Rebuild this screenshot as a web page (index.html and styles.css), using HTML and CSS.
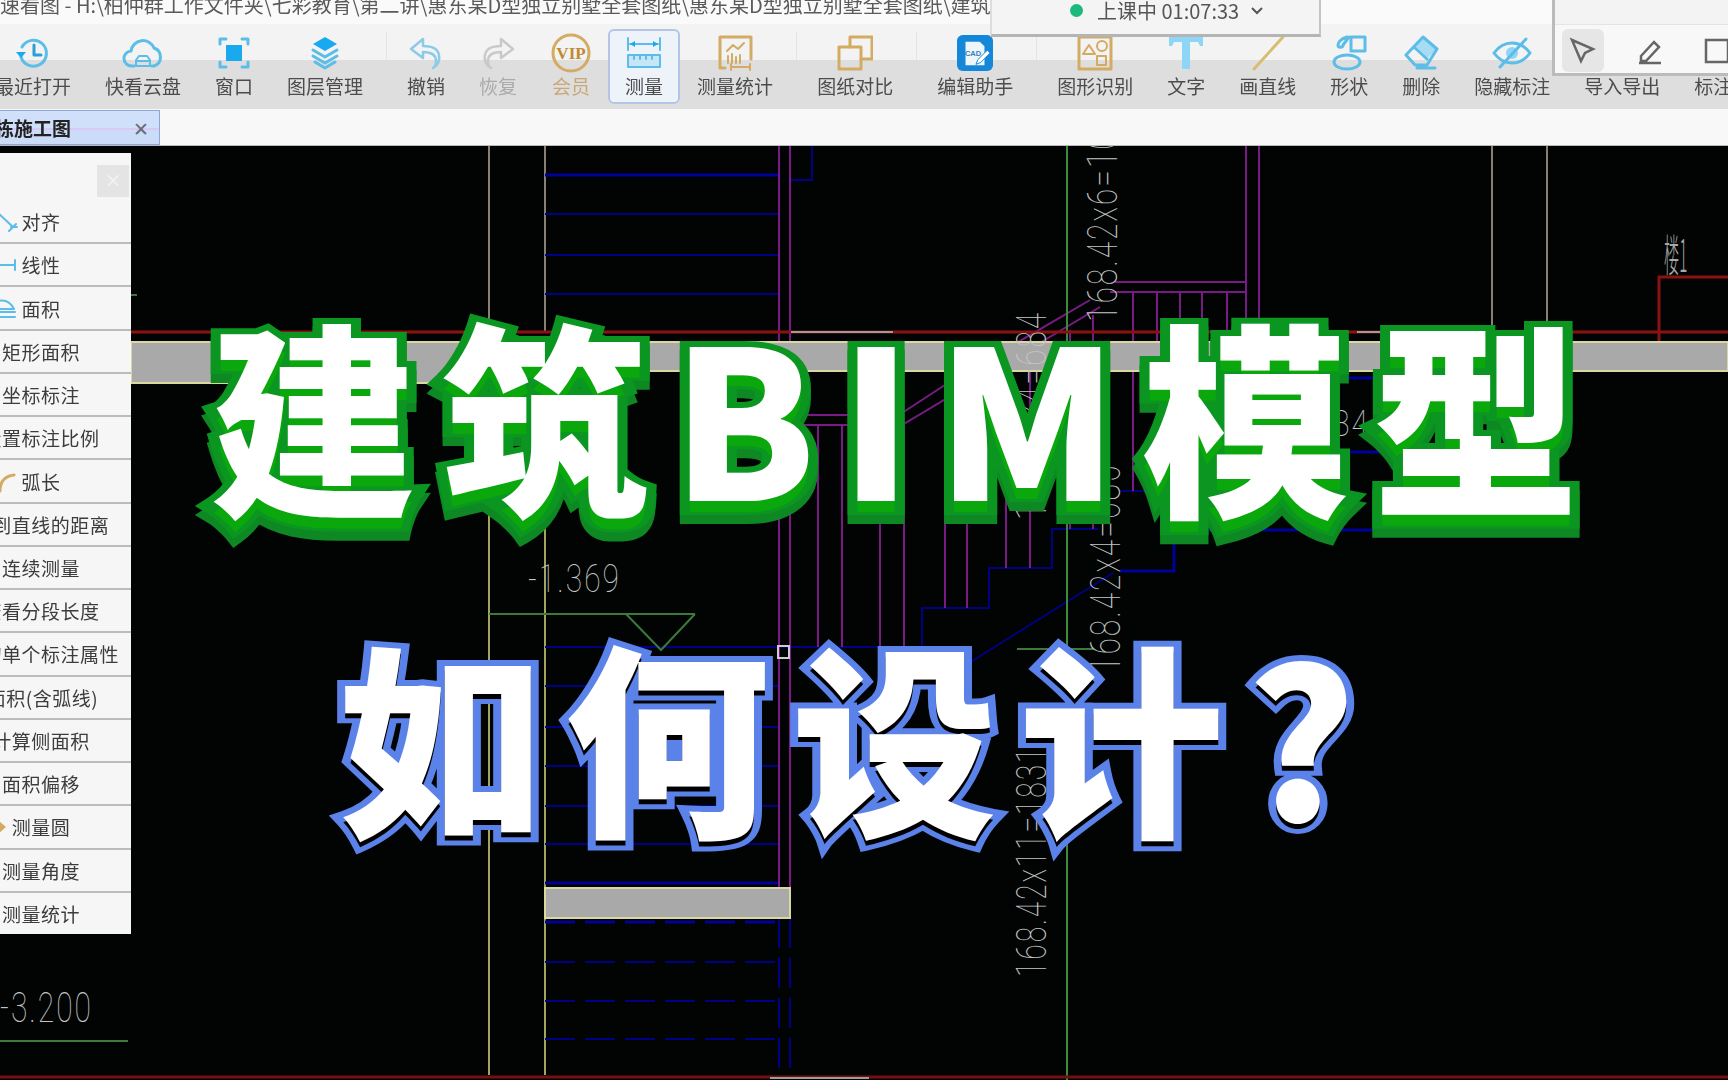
FILE: index.html
```html
<!DOCTYPE html>
<html lang="zh-CN">
<head>
<meta charset="utf-8">
<title>快速看图</title>
<link rel="stylesheet" href="styles.css">
</head>
<body>
<div class="app">
  <header class="titlebar">快速看图 - H:\柏仲群工作文件夹\七彩教育\第二讲\惠东某D型独立别墅全套图纸\惠东某D型独立别墅全套图纸\建筑\2</header>

  <nav class="toolbar">
    <div class="tool"><svg class="ic" viewBox="0 0 36 36"><path class="b-line" d="M7 12A13 13 0 1 1 6 22"/><path class="b-fill" d="M1 17h10l-5 6z"/><path class="b-line dark" d="M19 10v10h7"/></svg><span>最近打开</span></div>
    <div class="tool"><svg class="ic ic-wide" viewBox="0 0 40 36"><path class="b-line" d="M11 31H9a7.500 7.500 0 0 1-1-15 12 12 0 0 1 23-3 9.500 9.500 0 0 1 0 18h-2"/><path class="b-line thin" d="M13 31v-6l3-4h8l3 4v6zM13 26h14"/></svg><span>快看云盘</span></div>
    <div class="tool"><svg class="ic" viewBox="0 0 36 36"><rect class="b-fill" x="10" y="10" width="16" height="16"/><path class="b-line" d="M4 9V4h6M26 4h6v5M32 27v5h-6M10 32H4v-5"/></svg><span>窗口</span></div>
    <div class="tool"><svg class="ic" viewBox="0 0 36 36"><path class="b-fill" d="M18 2l12 7-12 7-12-7z"/><path class="b-line" d="M6 15l12 7 12-7M6 21l12 7 12-7M8 27l10 6 10-6"/></svg><span>图层管理</span></div>
    <i class="sep"></i>
    <div class="tool"><svg class="ic" viewBox="0 0 36 36"><path class="l-line" d="M15 4L3 14l12 9v-6c9 0 13 3 13 9 0 3-1 6-3 7 5-3 7-8 6-13-1-6-7-9-16-9z"/></svg><span>撤销</span></div>
    <div class="tool off"><svg class="ic" viewBox="0 0 36 36"><path class="g-line" d="M21 4l12 10-12 9v-6c-9 0-13 3-13 9 0 3 1 6 3 7-5-3-7-8-6-13 1-6 7-9 16-9z"/></svg><span>恢复</span></div>
    <div class="tool gold"><svg class="ic vip" viewBox="0 0 40 40"><circle class="au-line" cx="20" cy="20" r="18"/><text class="vip-text" x="20" y="26">VIP</text></svg><span>会员</span></div>
    <div class="tool active"><svg class="ic" viewBox="0 0 36 36"><path class="b-line thin" d="M2 3v12M34 3v12M4 9h28"/><path class="b-fill" d="M4 9l5-3v6zM32 9l-5-3v6z"/><rect class="b-line thin soft" x="2" y="20" width="32" height="12"/><path class="b-line thin" d="M8 20v4M14 20v4M20 20v4M26 20v4"/></svg><span>测量</span></div>
    <div class="tool"><svg class="ic" viewBox="0 0 36 36"><path class="au-line" d="M3 33V2h31v22M3 33h5"/><path class="au-line thin" d="M10 16l6-6 5 4 6-6M11 28v-7M15 28v-9M19 28v-6M23 28v-8M14 32h19M14 29v6M33 29v6"/></svg><span>测量统计</span></div>
    <i class="sep"></i>
    <div class="tool"><svg class="ic" viewBox="0 0 36 36"><path class="au-line" d="M13 12V2h22v22H24"/><rect class="au-line" x="2" y="12" width="22" height="22"/></svg><span>图纸对比</span></div>
    <i class="sep"></i>
    <div class="tool"><svg class="ic" viewBox="0 0 38 38"><rect class="cad-bg" width="38" height="38" rx="6"/><path class="cad-page" d="M9 7h15l5 5v20H9z"/><text class="cad-text" x="17" y="22">CAD</text><path class="cad-pen" d="M20 31l2-5 10-10 3 3-10 10z"/></svg><span>编辑助手</span></div>
    <i class="sep"></i>
    <div class="tool"><svg class="ic" viewBox="0 0 36 36"><rect class="au-line" x="2" y="2" width="32" height="32"/><path class="au-line thin" d="M6 19l6-9 6 9z"/><circle class="au-line thin" cx="25" cy="11" r="5"/><rect class="au-line thin" x="20" y="21" width="9" height="9"/></svg><span>图形识别</span></div>
    <div class="tool"><svg class="ic" viewBox="0 0 36 36"><path class="b-fill soft" d="M1 2h34v9h-3l-2-4h-8v27h-8V7H6l-2 4H1z"/></svg><span>文字</span></div>
    <div class="tool"><svg class="ic" viewBox="0 0 36 36"><path class="au-line wide" d="M4 34L33 2"/></svg><span>画直线</span></div>
    <div class="tool"><svg class="ic" viewBox="0 0 36 36"><path class="b-line" d="M16 2v0c-7 2-9 6-9 8 0 3 5 3 5 0l6-8"/><rect class="b-line" x="20" y="2" width="14" height="14"/><ellipse class="b-line" cx="16" cy="27" rx="13" ry="7"/></svg><span>形状</span></div>
    <div class="tool"><svg class="ic" viewBox="0 0 36 36"><path class="b-fill pale" d="M20 2l14 12-9 9-13-12z"/><path class="b-line" d="M20 2L3 20l9 10h12l10-16zM11 12l13 12M14 33h18"/></svg><span>删除</span></div>
    <div class="tool"><svg class="ic ic-wide" viewBox="0 0 40 36"><path class="b-line" d="M2 18c5-7 11-10 18-10s13 3 18 10c-5 7-11 10-18 10S7 25 2 18z"/><circle class="b-fill soft" cx="20" cy="18" r="6"/><path class="b-line" d="M8 32L34 4"/></svg><span>隐藏标注</span></div>
    <div class="tool"><svg class="ic" viewBox="0 0 36 36"></svg><span>导入导出</span></div>
    <div class="tool"><svg class="ic" viewBox="0 0 36 36"></svg><span>标注</span></div>
  </nav>

  <div class="tabbar">
    <div class="tab"><b>单栋施工图</b><span class="tab-x">✕</span></div>
  </div>

  <main class="canvas">
    <svg class="drawing" viewBox="0 146 1728 934">
      <g class="beige">
        <path d="M489 146V333M545 146V333M1492 146V333M1547 146V333"/>
      </g>
      <g class="yellow">
        <path d="M489 384V1075M545 384V1075"/>
      </g>
      <g class="blue">
        <path class="heavy" d="M545 175H779"/>
        <path d="M545 214H779M545 255H779M545 294H779"/>
        <path d="M790 180H812V146"/>
        <path d="M545 647H922V608H989V568H1052V529H1098M1120 491H1170"/>
        <path d="M545 686H779M545 727H779M545 766H779M545 806H779M545 844H779"/>
        <path class="heavy" d="M545 883H779"/>
        <path class="dash heavy" d="M545 922H779"/>
        <path class="dash" d="M545 962H779M545 1001H779M545 1039H779M779 918V1075M790 918V1075"/>
        <path d="M969 663L1113 573"/>
        <path class="heavy" d="M1120 571H1174V530H1390M1340 378H1390M1340 452H1390"/>
      </g>
      <g class="purple">
        <path d="M779 146V888M790 146V888M1246 146V380M1259 146V340"/>
        <path d="M1115 282H1246M1110 292H1246"/>
        <path d="M1133 292V491M1157 292V491M1180 292V380M1202 292V380M1227 292V380"/>
        <path d="M802 415H902M802 425H902L1100 307M902 413L948 383L1090 300"/>
        <path d="M818 425V647M842 425V647M880 425V647M904 425V647M945 400V608M967 388V608M1006 365V568M1030 350V568M1070 330V529M1093 315V529"/>
      </g>
      <g class="green">
        <path d="M1067 146V1080"/>
        <path class="dim" d="M489 614H695M626 614L661 650L695 614M0 1041H128M1017 649H1094M131 295H137"/>
      </g>
      <g class="red">
        <path d="M131 332H1728M1659 342V277H1728"/>
        <path class="thin-red" d="M0 1077H1728"/>
      </g>
      <path class="gray-seg" d="M791 332H893M1357 332H1382M770 1078H869"/>
      <rect class="band" x="131" y="342" width="414" height="41"/>
      <rect class="band" x="545" y="342" width="1183" height="29"/>
      <rect class="band" x="545" y="888" width="245" height="30"/>
      <rect class="marker" x="778" y="646" width="11" height="12"/>
      <g class="dim-text">
        <text transform="translate(1117 322) rotate(-90) scale(1 1.4)">168.42x6=1010</text>
        <text transform="translate(1120 673) rotate(-90) scale(1 1.4)">168.42x4=685</text>
        <text transform="translate(1046 520) rotate(-90) scale(1 1.4)">168.42x4=684</text>
        <text transform="translate(1046 977) rotate(-90) scale(.94 1.4)">168.42x11=1831</text>
        <text transform="translate(528 592) scale(1 1.3)">-1.369</text>
        <text transform="translate(0 1022) scale(1 1.4)">-3.200</text>
        <text transform="translate(1333 436) scale(1 1.2)">84</text>
        <text class="thin-cjk" transform="translate(1664 272) scale(.95 2.800)">楼1</text>
      </g>
    </svg>

    <aside class="panel">
      <div class="panel-head"><span class="panel-close">×</span></div>
      <div class="row"><span class="lbl"><svg class="rico" viewBox="0 0 20 22"><path class="b-line thin" d="M0 2L15 16M11 20l7-7M13 16h6"/></svg>对齐</span></div>
      <div class="row"><span class="lbl"><svg class="rico" viewBox="0 0 20 22"><path class="b-line thin" d="M0 11H17M17 6v10"/></svg>线性</span></div>
      <div class="row"><span class="lbl"><svg class="rico" viewBox="0 0 20 22"><path class="b-line thin" d="M0 3c8-2 13 2 16 8H0M0 14H17"/><path class="b-line thin" d="M0 19H17"/></svg>面积</span></div>
      <div class="row"><span class="lbl">矩形面积</span></div>
      <div class="row"><span class="lbl">坐标标注</span></div>
      <div class="row"><span class="lbl">设置标注比例</span></div>
      <div class="row"><span class="lbl"><svg class="rico" viewBox="0 0 20 22"><path class="au-line" d="M2 20C2 10 7 5 16 4"/></svg>弧长</span></div>
      <div class="row"><span class="lbl">点到直线的距离</span></div>
      <div class="row"><span class="lbl">连续测量</span></div>
      <div class="row"><span class="lbl">查看分段长度</span></div>
      <div class="row"><span class="lbl">查询单个标注属性</span></div>
      <div class="row"><span class="lbl nudge">面积(含弧线)</span></div>
      <div class="row"><span class="lbl">计算侧面积</span></div>
      <div class="row"><span class="lbl">面积偏移</span></div>
      <div class="row"><span class="lbl"><svg class="rico" viewBox="0 0 20 22"><path class="au-fill" d="M9 4l8 7-8 7-8-7z"/></svg>测量圆</span></div>
      <div class="row"><span class="lbl">测量角度</span></div>
      <div class="row"><span class="lbl">测量统计</span></div>
    </aside>

    <h1 class="headline line-one" data-text="建筑BIM模型">建筑BIM模型</h1>
    <h2 class="headline line-two" data-text="如何设计?">如何设计?</h2>
  </main>

  <div class="float timer"><i class="dot"></i><span>上课中 01:07:33</span><svg class="chev" viewBox="0 0 12 8"><path d="M1 1l5 5 5-5"/></svg></div>

  <div class="float pens">
    <div class="pens-top"></div>
    <div class="pens-row">
      <span class="pen-btn on"><svg viewBox="0 0 28 28"><path d="M3 3l21 9-8 4-4 8z"/></svg></span>
      <span class="pen-btn"><svg viewBox="0 0 28 28"><path d="M5 19L18 5l5 5-13 14H5zM3 26h22"/></svg></span>
      <span class="pen-btn"><svg viewBox="0 0 28 28"><rect x="3" y="3" width="22" height="22"/></svg></span>
    </div>
  </div>
</div>
</body>
</html>
```

FILE: styles.css
```css
* { box-sizing: border-box; margin: 0; padding: 0; }
html, body { width: 1728px; height: 1080px; overflow: hidden; background: #000; }
body { font-family: "Noto Sans CJK SC", "Noto Sans", sans-serif; color: #444; }

.app { position: relative; width: 1728px; height: 1080px; display: flex; flex-direction: column; overflow: hidden; }

.titlebar { height: 24px; flex: none; background: #fafafa; font-size: 20px; line-height: 10px; margin-left: -20px; white-space: nowrap; color: #5a5a5a; overflow: hidden; filter: blur(.4px); }

.toolbar { height: 85px; flex: none; display: flex; align-items: flex-start; margin-left: -22px; background: linear-gradient(#f3f3f3 0 36px, #dedede 36px); }
.tool { flex: none; height: 75px; margin-top: 5px; padding: 6px 17px 0; display: flex; flex-direction: column; align-items: center; gap: 4px; border-radius: 6px; }
.tool span { font-size: 19px; line-height: 22px; color: #4c4c4c; white-space: nowrap; filter: blur(.35px); }
.tool.off span { color: #aaa; }
.tool.gold span { color: #c8a878; }
.tool.active { background: #eef3fa; box-shadow: inset 0 0 0 2px #b4c4e4; }
.sep { flex: none; width: 1px; height: 28px; margin: 8px 3px 0 6px; background: #e4e4e4; }
.ic { width: 36px; height: 36px; flex: none; }
.ic.ic-wide { width: 42px; }
.ic.vip { width: 40px; height: 40px; margin: -2px 0; }

.b-line, .au-line, .l-line, .g-line { fill: none; stroke-width: 3; stroke-linejoin: round; stroke-linecap: round; }
.b-line { stroke: #5cbde8; }
.b-line.dark { stroke: #2c9fd8; }
.b-line.thin, .au-line.thin { stroke-width: 2; }
.b-line.soft { fill: #c4e6f6; }
.b-fill { fill: #19a9ef; }
.b-fill.soft { fill: #8ed6f6; }
.b-fill.pale { fill: #a8dcf4; }
.l-line { stroke: #8ccbe8; stroke-width: 2.500; }
.g-line { stroke: #c9c9c9; stroke-width: 2.500; }
.au-line { stroke: #d4ab62; }
.au-line.wide { stroke-width: 3; stroke: #d8bc70; }
.au-fill { fill: #d4ab62; }
.vip-text { font: 900 17px "Liberation Serif", serif; fill: #c08a30; text-anchor: middle; }
.cad-bg { fill: #1487d8; }
.cad-page { fill: #eef6fc; }
.cad-text { font: 700 8px "Liberation Sans", sans-serif; fill: #3a7fb8; text-anchor: middle; }
.cad-pen { fill: #fff; stroke: #1487d8; }

.tabbar { height: 37px; flex: none; background: #f8f8f8; display: flex; align-items: stretch; border-bottom: 1px solid #bbb; padding-top: 1px; }
.tab { width: 160px; background: linear-gradient(#d0e0fb 0 17px, #d8c8f4 17px 19px, #cbdcf9 19px); border: 1px solid #8ea6dc; border-left: 0; display: flex; align-items: center; justify-content: space-between; padding-right: 10px; overflow: hidden; }
.tab b { font-size: 19px; line-height: 34px; color: #222; margin-left: -24px; font-weight: 700; white-space: nowrap; filter: blur(.3px); }
.tab-x { font-size: 19px; color: #6a6a78; }

.canvas { position: relative; flex: 1; background: #010403; overflow: hidden; }
.drawing { position: absolute; inset: 0; width: 1728px; height: 934px; fill: none; stroke-width: 2; }
.beige path { stroke: #8a7f74; }
.yellow path { stroke: #a4a45c; }
.blue path { stroke: #000085; }
.blue .heavy { stroke-width: 3; stroke: #00009a; }
.blue .dash { stroke-dasharray: 30 10; }
.purple path { stroke: #7a1a84; }
.green path { stroke: #3c8a3c; }
.green .dim { stroke: #3c7a3c; }
.red path { stroke: #8c1212; stroke-width: 3; }
.red .thin-red { stroke: #761010; }
.gray-seg { stroke: #9c9c9c; stroke-width: 2; }
.band { fill: #a9a9a9; stroke: #d8d8a0; stroke-width: 2; }
.marker { fill: none; stroke: #ccc; stroke-width: 2; }
.dim-text text { font: 100 30px Roboto, "Liberation Sans", sans-serif; letter-spacing: 2px; fill: #c4c4c4; stroke: none; }
.dim-text .thin-cjk { font: 300 16px "Noto Sans CJK SC", sans-serif; letter-spacing: 0; fill: #a8a8a8; }

.panel { position: absolute; left: -49px; top: 7px; width: 180px; height: 781px; background: #f6f6f6; display: flex; flex-direction: column; }
.panel-head { height: 48px; flex: none; display: flex; justify-content: flex-end; padding: 12px 2px 4px 0; }
.panel-close { width: 32px; height: 32px; background: #e4e4e4; color: #f6f6f6; font-size: 17px; line-height: 30px; text-align: center; }
.row { flex: 1; min-height: 0; display: flex; align-items: center; justify-content: center; border-bottom: 2px solid #bcbcbc; }
.row:last-child { border-bottom: 0; }
.lbl { position: relative; font-size: 19px; letter-spacing: .5px; line-height: 1; color: #3c3c3c; white-space: nowrap; filter: blur(.3px); }
.lbl.nudge { margin-left: 3px; }
.rico { position: absolute; right: 100%; top: -1px; width: 20px; height: 22px; margin-right: 3px; }

.headline { position: absolute; z-index: 1; font-weight: 900; white-space: nowrap; line-height: 1; paint-order: stroke fill; }
.headline::before, .headline::after { content: attr(data-text); position: absolute; left: 0; }
.headline::after { color: #fff; -webkit-text-stroke: 0; }
.line-one { left: 210px; top: 166px; font-size: 207px; letter-spacing: 24px; color: #0a9620; -webkit-text-stroke: 20px #0a9620; }
.line-one::before { top: 9px; z-index: -1; color: #0d8822; -webkit-text-stroke: 20px #0d8822; }
.line-one::after { top: -4px; text-shadow: 0 11px 0 #0aa80c; }
.line-two { left: 338px; top: 485px; font-size: 205px; letter-spacing: 22px; color: #5b82e8; -webkit-text-stroke: 16px #5b82e8; }
.line-two::before { display: none; }
.line-two::after { top: -2px; text-shadow: 0 5px 0 #000; }

.float { position: absolute; top: 0; background: #f4f4f4; }
.timer { left: 990px; width: 331px; height: 37px; border-left: 2px solid #ddd; border-right: 2px solid #c4c4c4; border-bottom: 3px solid #b4b4b4; display: flex; align-items: center; padding: 0 0 13px 78px; font-size: 20px; color: #555; }
.timer span { margin-left: 14px; white-space: nowrap; filter: blur(.3px); }
.dot { width: 13px; height: 13px; border-radius: 50%; background: #1bb97c; flex: none; }
.chev { width: 12px; height: 8px; margin-left: 12px; fill: none; stroke: #555; stroke-width: 2; }

.pens { left: 1552px; width: 190px; height: 76px; background: #f8f8f8; border-left: 3px solid #bbb; border-bottom: 3px solid #bbb; }
.pens-top { height: 25px; background: #f3f3f3; border-bottom: 1px solid #e4e4e4; }
.pens-row { display: flex; gap: 25px; padding: 4px 0 0 7px; }
.pen-btn { width: 42px; height: 43px; border-radius: 6px; display: flex; align-items: center; justify-content: center; }
.pen-btn.on { background: #e6e6e6; }
.pen-btn svg { width: 28px; height: 28px; fill: none; stroke: #666; stroke-width: 2.500; }
```
